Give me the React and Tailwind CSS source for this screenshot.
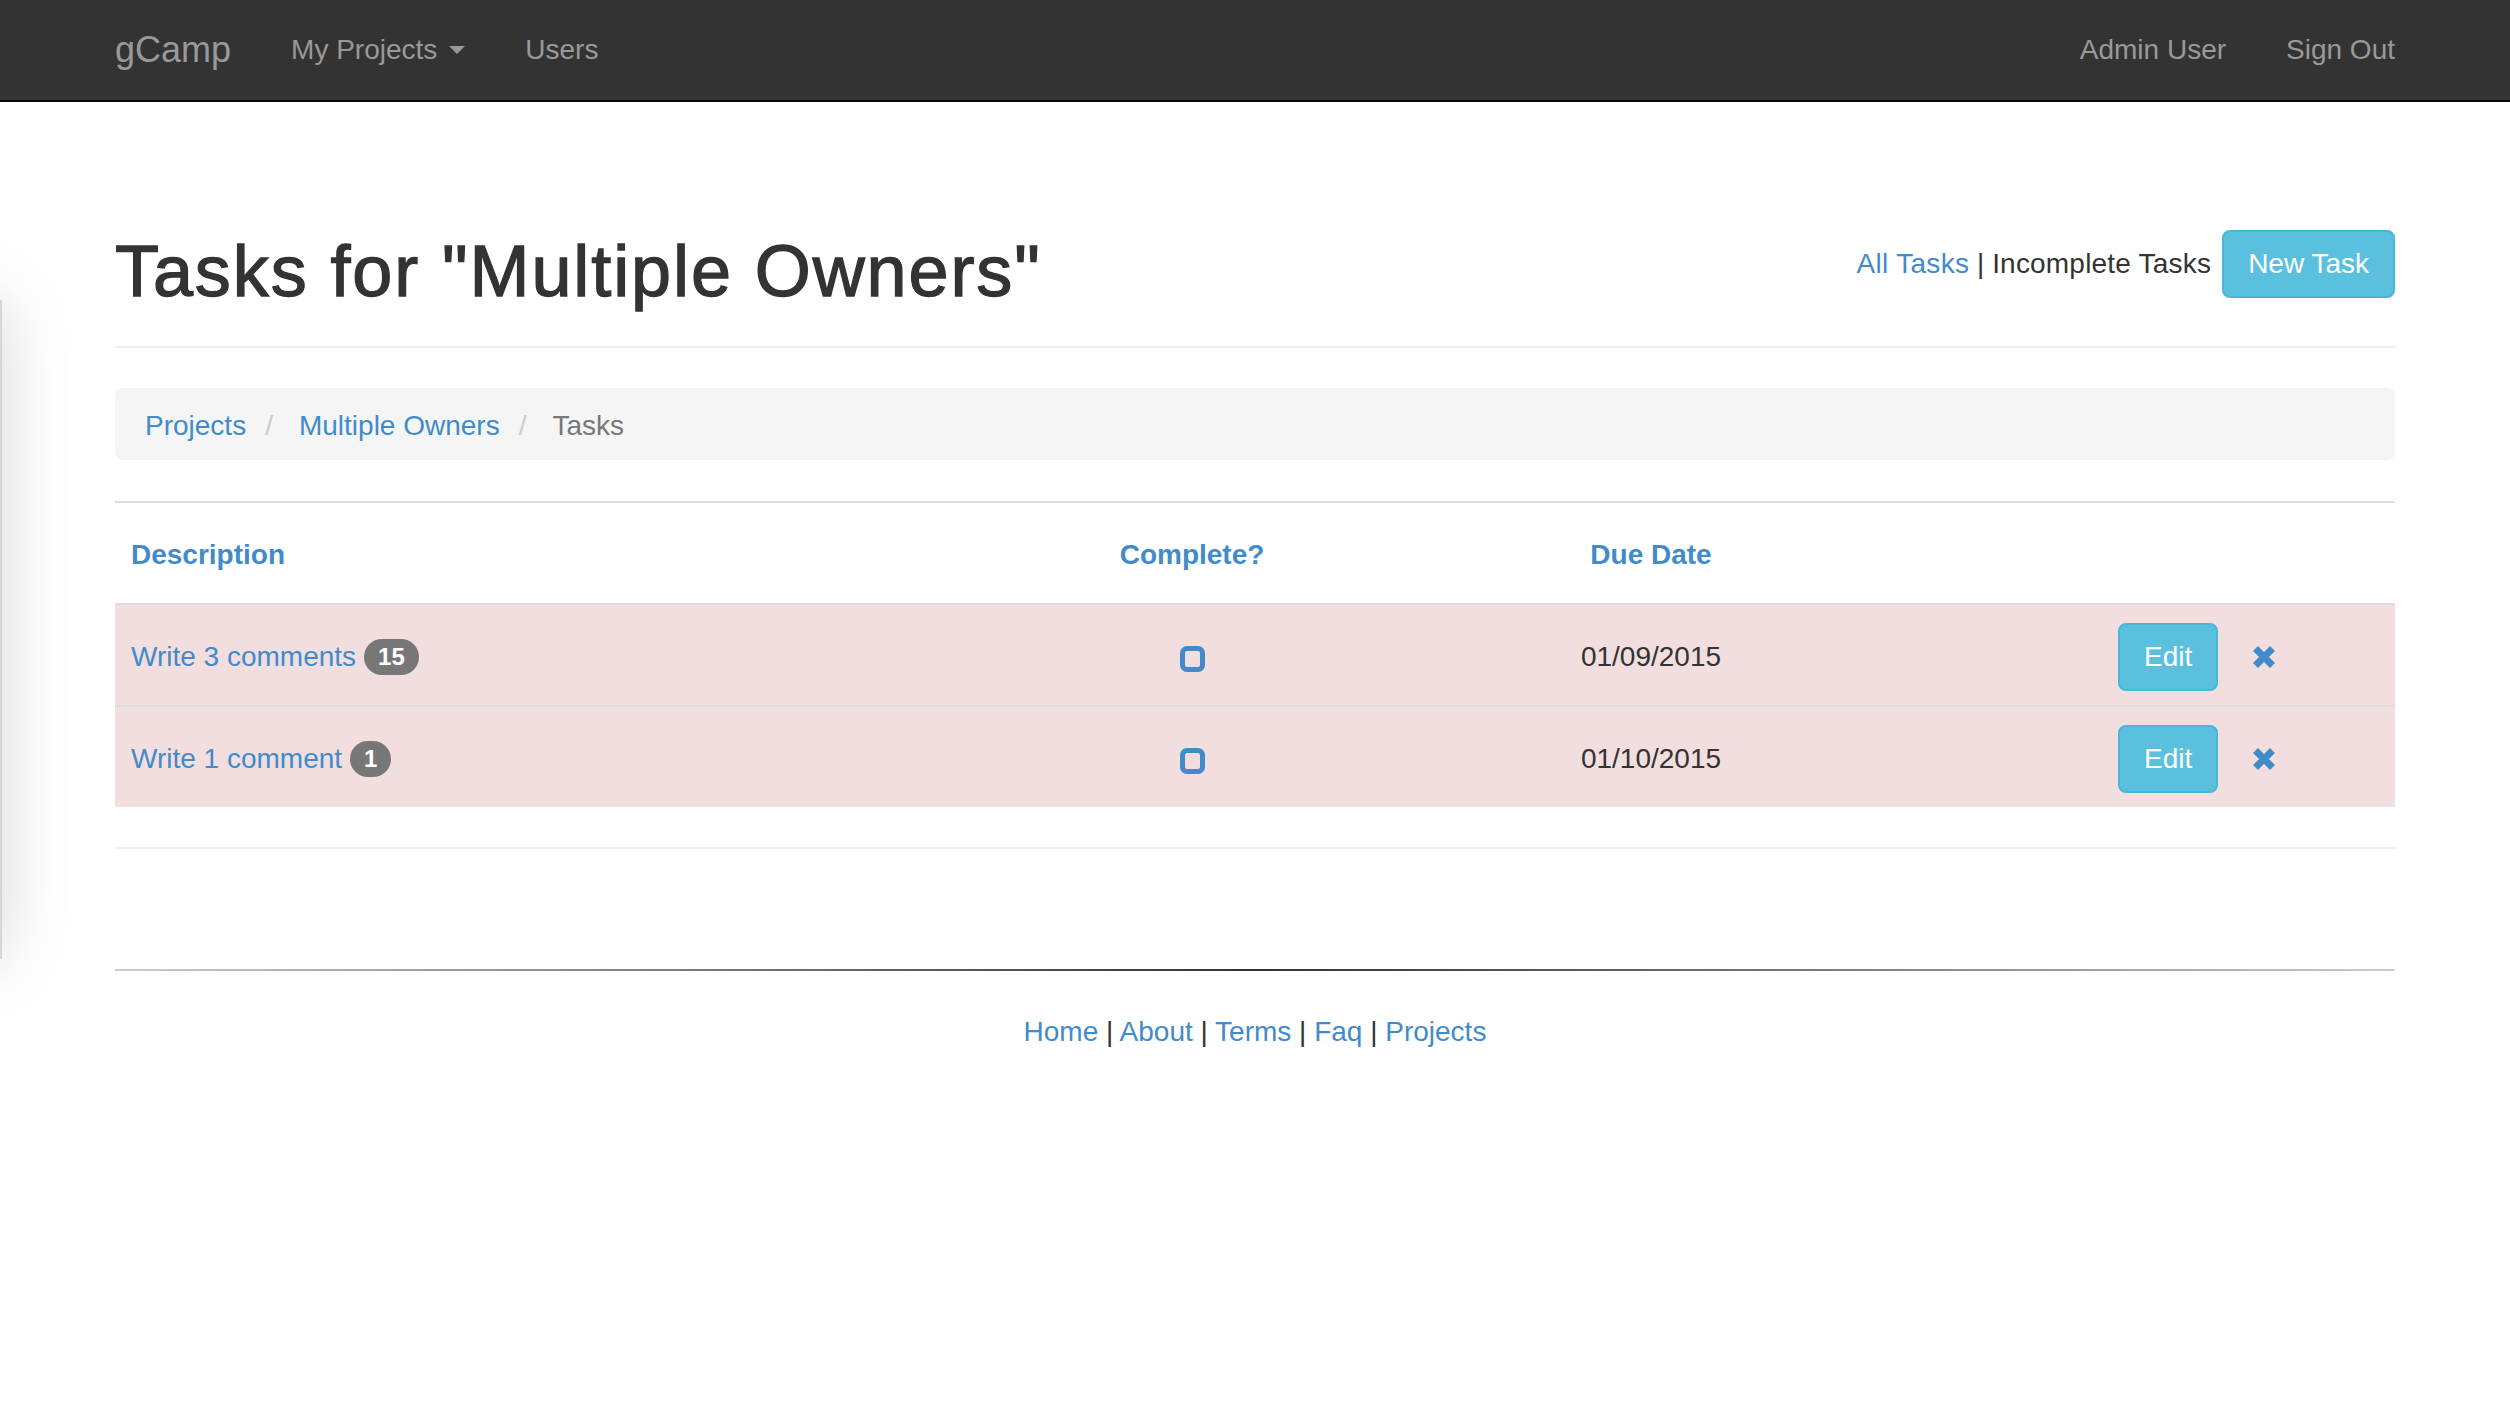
import React from 'react'

const link = "text-[#428bca]"
const sep = "text-[#333]"

const tasks = [
    {id: 1, description: "Write 3 comments", comments: 15, due: "01/09/2015"},
    {id: 2, description: "Write 1 comment", comments: 1, due: "01/10/2015"},
]

const RemoveIcon = () => (
    <svg width="24" height="24" viewBox="0 0 24 24" className="block">
        <path d="M3.5 3.5 L20.5 20.5 M20.5 3.5 L3.5 20.5" stroke="#428bca" strokeWidth="7" fill="none"/>
    </svg>
)

const Navbar = () => (
    <div className="h-[102px] bg-[#333] border-b-2 border-[#080808]">
        <div className="mx-auto w-[2280px] h-[100px] flex items-center text-[28px] text-[#999]">
            <span className="text-[36px] pr-[30px]">gCamp</span>
            <span className="px-[30px] flex items-center">
                My Projects
                <span className="ml-[12px] w-0 h-0 border-t-[8px] border-x-[8px] border-x-transparent border-t-[#999]"/>
            </span>
            <span className="px-[30px]">Users</span>
            <span className="ml-auto px-[30px]">Admin User</span>
            <span className="pl-[30px]">Sign Out</span>
        </div>
    </div>
)

const Footer = () => (
    <div className="mx-auto w-[2280px]">
        <div className="mt-[120px] h-[2px] bg-gradient-to-r from-[#ccc] via-[#333] to-[#ccc]"/>
        <div className="mt-[41px] leading-[40px] text-[28px] text-center">
            <span className={link}>Home</span>
            <span className={sep}> | </span>
            <span className={link}>About</span>
            <span className={sep}> | </span>
            <span className={link}>Terms</span>
            <span className={sep}> | </span>
            <span className={link}>Faq</span>
            <span className={sep}> | </span>
            <span className={link}>Projects</span>
        </div>
    </div>
)

const TaskRow = ({task, first}) => (
    <div className={`grid grid-cols-[845px_464px_454px_1fr] bg-[#f2dede] items-center pt-[3px] ${first ? "h-[100px]" : "border-t-2 border-[#ddd] h-[102px]"}`}>
        <div className="pl-[16px] flex items-center">
            <span className={link}>{task.description}</span>
            <span className="ml-[8px] bg-[#777] text-white text-[24px] font-bold leading-none px-[14px] py-[6px] rounded-[20px]">{task.comments}</span>
        </div>
        <div className="flex justify-center">
            <span className="mt-[4px] w-[25px] h-[26px] border-[5px] border-[#428bca] rounded-[7px]"/>
        </div>
        <div className="text-center">{task.due}</div>
        <div className="pl-[240px] flex items-center gap-[34px]">
            <span className="h-[68px] px-[24px] flex items-center bg-[#5bc0de] border-2 border-[#46b8da] rounded-[8px] text-white">Edit</span>
            <RemoveIcon/>
        </div>
    </div>
)

export default function App() {
    return (
        <div className="relative min-h-[1408px] bg-white text-[#333] text-[28px] font-['Liberation_Sans',Helvetica,Arial,sans-serif] overflow-hidden">
            <Navbar/>

            {/* edge of a panel sliding in from the left */}
            <div className="absolute top-[300px] left-[-100px] w-[102px] h-[659px] bg-white border-r-2 border-[#d6d6d6] shadow-[0_0_70px_rgba(0,0,0,0.16)]"/>

            <div className="mx-auto w-[2280px]">
                <div className="flex items-start justify-between pt-[128px] pb-[35px] border-b-2 border-[#eee]">
                    <h1 className="mt-[2px] text-[72px] leading-[79px] tracking-[1.9px] text-[#333] [-webkit-text-stroke:1.3px_#333]">Tasks for "Multiple Owners"</h1>
                    <div className="flex items-center h-[68px]">
                        <span className={`${link} tracking-[0.3px]`}>All Tasks</span>
                        <span className="whitespace-pre"> | </span>
                        <span className="tracking-[0.2px]">Incomplete Tasks</span>
                        <span className="ml-[11px] h-[68px] px-[24px] flex items-center bg-[#5bc0de] border-2 border-[#46b8da] rounded-[8px] text-white">New Task</span>
                    </div>
                </div>

                <div className="mt-[40px] h-[72px] px-[30px] pt-[3px] flex items-center bg-[#f5f5f5] rounded-[8px]">
                    <span className={link}>Projects</span>
                    <span className="ml-[19px] mr-[26px] text-[#ccc]">/</span>
                    <span className={link}>Multiple Owners</span>
                    <span className="ml-[19px] mr-[26px] text-[#ccc]">/</span>
                    <span className="text-[#777]">Tasks</span>
                </div>

                <div className="mt-[41px] border-t-2 border-[#ddd]">
                    <div className="grid grid-cols-[845px_464px_454px_1fr] h-[102px] pt-[3px] items-center border-b-2 border-[#ddd] font-bold text-[#428bca]">
                        <div className="pl-[16px]">Description</div>
                        <div className="text-center">Complete?</div>
                        <div className="text-center">Due Date</div>
                        <div/>
                    </div>
                    {tasks.map((t, i) => <TaskRow key={t.id} task={t} first={i === 0}/>)}
                </div>

                <div className="mt-[40px] h-[2px] bg-[#eee]"/>
            </div>

            <Footer/>
        </div>
    )
}
